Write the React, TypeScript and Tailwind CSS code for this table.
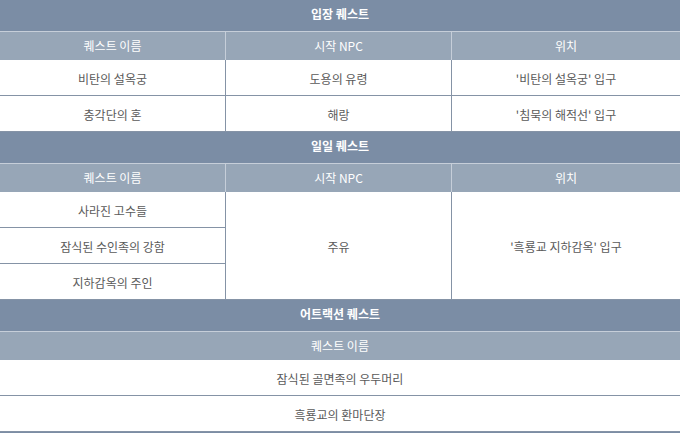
import React from "react";

const font = { fontFamily: '"Noto Sans CJK KR", "Noto Sans", sans-serif' };

function Title({ text }: { text: string }) {
  return (
    <div className="h-[31px] pb-[4px] bg-[#7b8da5] text-white font-bold text-[12px] flex items-center justify-center">
      {text}
    </div>
  );
}

function SubHeader({ cols }: { cols: string[] }) {
  if (cols.length === 1) {
    return (
      <div className="h-[29px] border-t border-[#c6ced9] bg-[#97a6b7] text-white text-[12px] flex items-center justify-center">
        {cols[0]}
      </div>
    );
  }
  return (
    <div className="grid grid-cols-[225px_226px_229px] h-[29px] border-t border-[#c6ced9] bg-[#97a6b7] text-white text-[12px]">
      <div className="flex items-center justify-center">{cols[0]}</div>
      <div className="flex items-center justify-center border-l border-[#c6ced9]">{cols[1]}</div>
      <div className="flex items-center justify-center border-l border-[#c6ced9]">{cols[2]}</div>
    </div>
  );
}

const cell = "h-[36px] pt-[3px] flex items-center justify-center border-b border-[#8593a6] bg-white";

export default function App() {
  return (
    <div style={font} className="w-[680px] h-[433px] overflow-hidden bg-white text-[#5a5a5a] text-[12px]">
      {/* 입장 퀘스트 */}
      <Title text="입장 퀘스트" />
      <SubHeader cols={["퀘스트 이름", "시작 NPC", "위치"]} />
      <div className="grid grid-cols-[225px_226px_229px]">
        <div className={cell}>비탄의 설옥궁</div>
        <div className={cell + " border-l"}>도용의 유령</div>
        <div className={cell + " border-l"}>'비탄의 설옥궁' 입구</div>
        <div className={cell}>충각단의 혼</div>
        <div className={cell + " border-l"}>해랑</div>
        <div className={cell + " border-l"}>'침묵의 해적선' 입구</div>
      </div>

      {/* 일일 퀘스트 */}
      <Title text="일일 퀘스트" />
      <SubHeader cols={["퀘스트 이름", "시작 NPC", "위치"]} />
      <div className="grid grid-cols-[225px_226px_229px] grid-rows-[36px_36px_36px]">
        <div className={cell}>사라진 고수들</div>
        <div className="row-span-3 pt-[3px] flex items-center justify-center border-l border-b border-[#8593a6] bg-white">주유</div>
        <div className="row-span-3 pt-[3px] flex items-center justify-center border-l border-b border-[#8593a6] bg-white">'흑룡교 지하감옥' 입구</div>
        <div className={cell}>잠식된 수인족의 강함</div>
        <div className={cell}>지하감옥의 주인</div>
      </div>

      {/* 어트랙션 퀘스트 */}
      <Title text="어트랙션 퀘스트" />
      <SubHeader cols={["퀘스트 이름"]} />
      <div className={cell}>잠식된 골면족의 우두머리</div>
      <div className={cell}>흑룡교의 환마단장</div>
      <Title text="" />
    </div>
  );
}
